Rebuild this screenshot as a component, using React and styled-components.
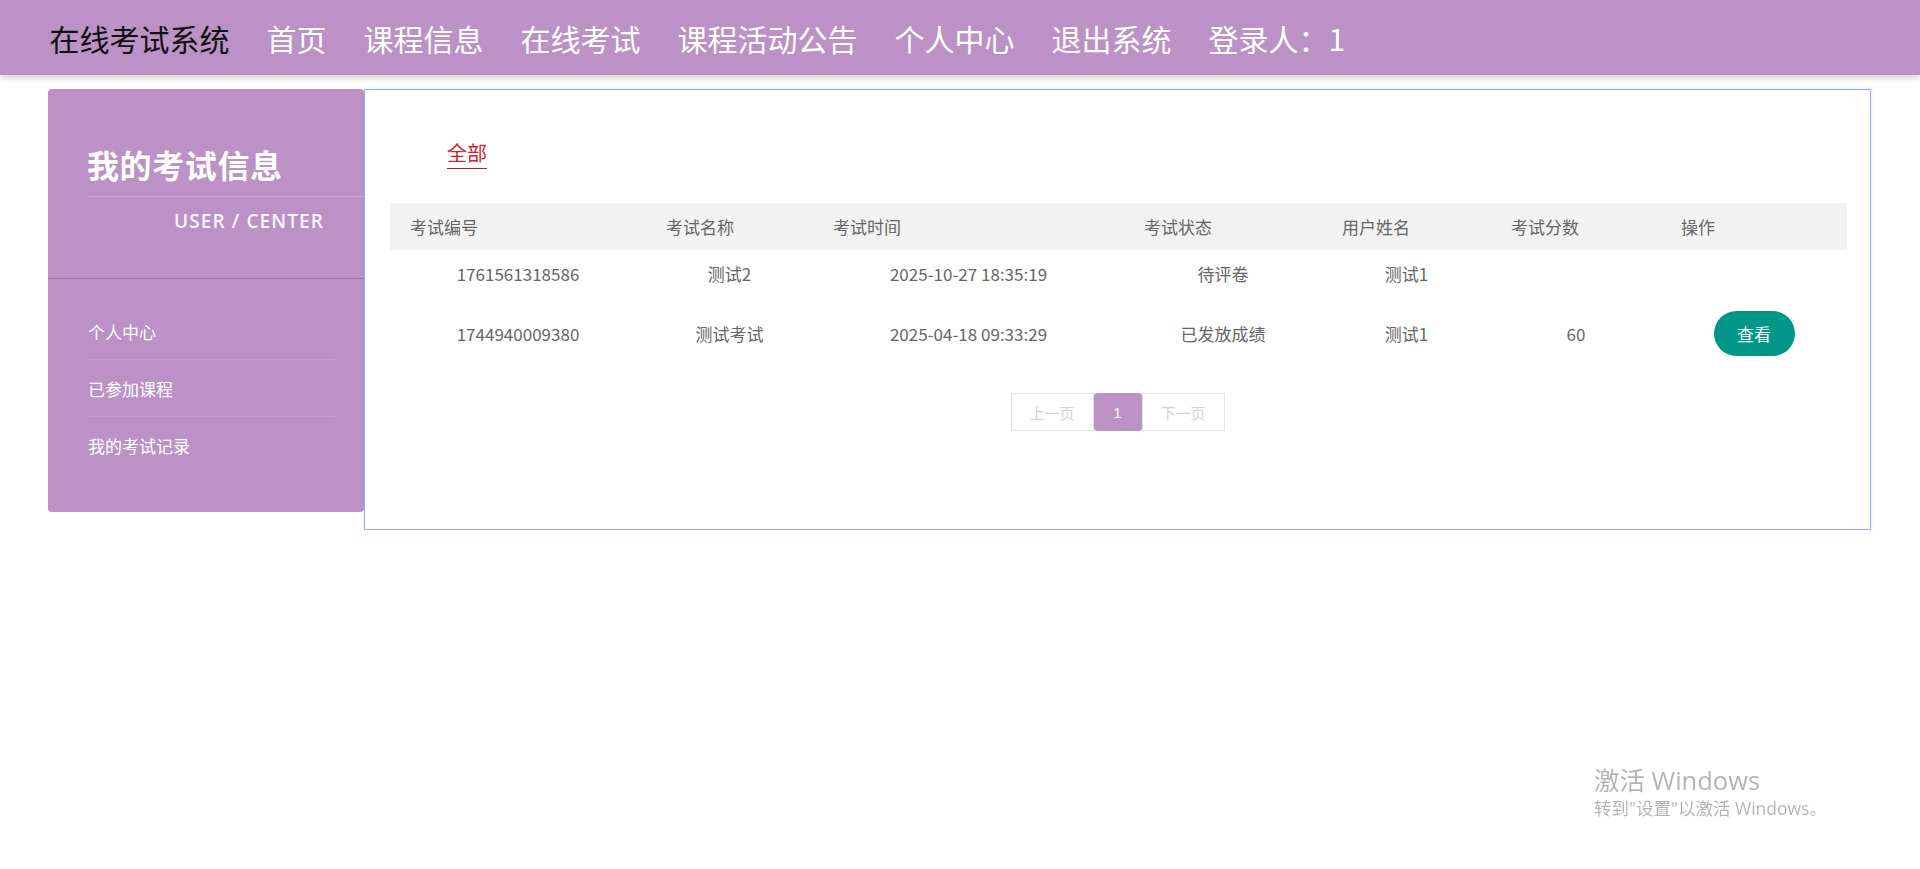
import React from "react";
import styled, { createGlobalStyle } from "styled-components";

const PURPLE = "#bc91c5";
const CJK = `"Microsoft YaHei", "Noto Sans CJK SC", "Noto Sans", sans-serif`;

const GlobalStyle = createGlobalStyle`
  html, body { margin: 0; padding: 0; background: #fff; }
  body { font-family: ${CJK}; }
  * { box-sizing: border-box; }
`;

const Header = styled.header`
  height: 75px;
  background: ${PURPLE};
  display: flex;
  align-items: center;
  padding-left: 31px;
  box-shadow: 0 3px 6px rgba(0, 0, 0, 0.18);
  position: relative;
  z-index: 2;
`;

const NavItem = styled.a`
  font-size: 30px;
  line-height: 40px;
  padding: 0 18.5px;
  color: ${(p) => (p.$brand ? "#111" : "#fff")};
  text-decoration: none;
  white-space: nowrap;
  cursor: pointer;
`;

const Main = styled.main`
  display: flex;
  align-items: flex-start;
  padding: 14px 0 0 48px;
`;

const Sidebar = styled.aside`
  width: 316px;
  flex: none;
  background: ${PURPLE};
  border-radius: 4px;
  padding-bottom: 38px;
`;

const SideHead = styled.div`
  padding: 53px 0 0 39px;
  border-bottom: 1px solid rgba(120, 80, 130, 0.45);
  padding-bottom: 45px;
`;

const SideTitle = styled.h2`
  margin: 0;
  font-size: 32px;
  line-height: 44px;
  font-weight: 700;
  color: #fff;
  letter-spacing: 0.6px;
  padding-bottom: 10px;
  border-bottom: 1px solid rgba(255, 255, 255, 0.22);
`;

const SideSub = styled.div`
  margin-top: 12px;
  padding-right: 40px;
  text-align: right;
  font-family: "Open Sans", "Noto Sans", sans-serif;
  font-size: 19px;
  font-weight: 600;
  line-height: 24px;
  letter-spacing: 1.1px;
  color: #fbf5fc;
`;

const Menu = styled.ul`
  list-style: none;
  margin: 0;
  padding: 24px 29px 0 40px;
`;

const MenuItem = styled.li`
  height: 57px;
  display: flex;
  align-items: center;
  font-size: 17px;
  color: #fff;
  border-bottom: 1px solid
    ${(p) => (p.$last ? "transparent" : "rgba(255, 255, 255, 0.12)")};
  cursor: pointer;
`;

const Panel = styled.section`
  width: 1507px;
  height: 441px;
  flex: none;
  background: #fff;
  border: 1px solid #97abf0;
  box-shadow: 0 0 3px rgba(120, 140, 220, 0.25);
  padding: 50px 25px 0;
`;

const TabBar = styled.div`
  padding-left: 57px;
  display: flex;
`;

const Tab = styled.span`
  font-size: 20px;
  line-height: 26px;
  padding-bottom: 2px;
  color: #c9252f;
  border-bottom: 1px solid #a8232a;
  cursor: pointer;
`;

const Table = styled.table`
  margin-top: 34px;
  width: 100%;
  border-collapse: collapse;
  table-layout: fixed;
  font-size: 17px;
  color: #666;
`;

const Th = styled.th`
  width: ${(p) => p.$w}px;
  height: 47px;
  background: #f2f2f2;
  text-align: left;
  padding: 0 0 0 20px;
  font-weight: 400;
  color: #666;
`;

const Td = styled.td`
  text-align: center;
  padding: 13px 0;
  line-height: 22px;
  height: ${(p) => p.$h || 48}px;
`;

const ViewButton = styled.button`
  height: 45px;
  width: 81px;
  border: none;
  border-radius: 23px;
  background: #009688;
  color: #fff;
  font-family: ${CJK};
  font-size: 17px;
  cursor: pointer;
`;

const Pager = styled.div`
  margin-top: 24px;
  display: flex;
  justify-content: center;
`;

const PageBtn = styled.span`
  height: 38px;
  min-width: ${(p) => (p.$active ? 48 : 83)}px;
  display: flex;
  align-items: center;
  justify-content: center;
  font-size: 15px;
  color: ${(p) => (p.$active ? "#fff" : "#d2d2d2")};
  background: ${(p) => (p.$active ? PURPLE : "#fff")};
  border: 1px solid ${(p) => (p.$active ? PURPLE : "#e2e2e2")};
  border-radius: ${(p) => (p.$active ? "3px" : "0")};
  font-family: ${(p) => (p.$active ? `"Liberation Sans", Arial, sans-serif` : CJK)};
  cursor: ${(p) => (p.$active ? "default" : "not-allowed")};
`;

const Watermark = styled.div`
  position: fixed;
  left: 1594px;
  top: 764px;
  color: rgba(0, 0, 0, 0.3);
  font-family: "Open Sans", "Noto Sans", "Noto Sans CJK SC", sans-serif;
  pointer-events: none;
`;

const WmTitle = styled.div`
  font-size: 25.5px;
  line-height: 33px;
`;

const WmSub = styled.div`
  font-size: 17.5px;
  line-height: 22px;
`;

const columns = [
  ["考试编号", 256],
  ["考试名称", 167],
  ["考试时间", 311],
  ["考试状态", 198],
  ["用户姓名", 169],
  ["考试分数", 170],
  ["操作", 186],
];

const rows = [
  ["1761561318586", "测试2", "2025-10-27 18:35:19", "待评卷", "测试1", "", false],
  ["1744940009380", "测试考试", "2025-04-18 09:33:29", "已发放成绩", "测试1", "60", true],
];

const navItems = ["首页", "课程信息", "在线考试", "课程活动公告", "个人中心", "退出系统", "登录人：1"];

export default function App() {
  return (
    <>
      <GlobalStyle />
      <Header>
        <NavItem $brand>在线考试系统</NavItem>
        {navItems.map((n) => (
          <NavItem key={n}>{n}</NavItem>
        ))}
      </Header>
      <Main>
        <Sidebar>
          <SideHead>
            <SideTitle>我的考试信息</SideTitle>
            <SideSub>USER / CENTER</SideSub>
          </SideHead>
          <Menu>
            <MenuItem>个人中心</MenuItem>
            <MenuItem>已参加课程</MenuItem>
            <MenuItem $last>我的考试记录</MenuItem>
          </Menu>
        </Sidebar>
        <Panel>
          <TabBar>
            <Tab>全部</Tab>
          </TabBar>
          <Table>
            <thead>
              <tr>
                {columns.map(([c, w]) => (
                  <Th key={c} $w={w}>
                    {c}
                  </Th>
                ))}
              </tr>
            </thead>
            <tbody>
              {rows.map((r) => (
                <tr key={r[0]}>
                  {r.slice(0, 6).map((v, i) => (
                    <Td key={i} $h={r[6] ? 71 : 48}>
                      {v}
                    </Td>
                  ))}
                  <Td $h={r[6] ? 71 : 48}>{r[6] && <ViewButton>查看</ViewButton>}</Td>
                </tr>
              ))}
            </tbody>
          </Table>
          <Pager>
            <PageBtn>上一页</PageBtn>
            <PageBtn $active>1</PageBtn>
            <PageBtn>下一页</PageBtn>
          </Pager>
        </Panel>
      </Main>
      <Watermark>
        <WmTitle>激活 Windows</WmTitle>
        <WmSub>转到"设置"以激活 Windows。</WmSub>
      </Watermark>
    </>
  );
}
